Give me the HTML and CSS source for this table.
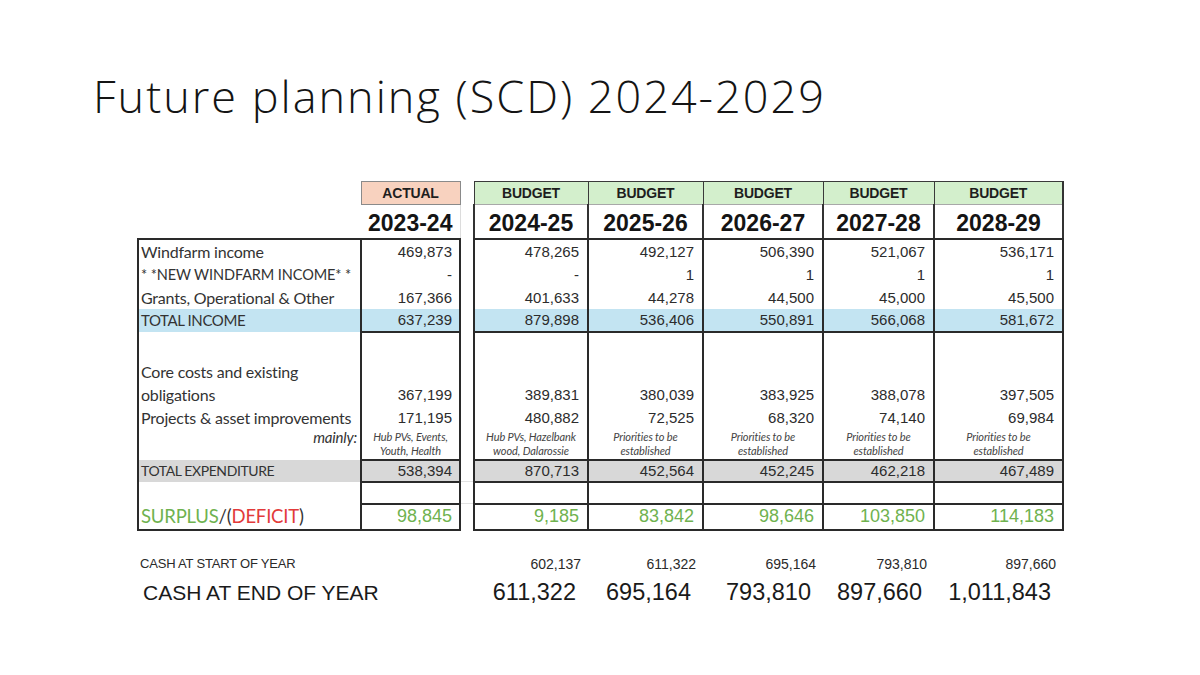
FILE: index.html
```html
<!DOCTYPE html>
<html lang="en">
<head>
<meta charset="utf-8">
<title>Future planning (SCD) 2024-2029</title>
<link rel="stylesheet" href="styles.css">
</head>
<body>
<div class="slide">
  <h1 class="title">Future planning (SCD) 2024-2029</h1>
  <table class="fin">
    <colgroup>
      <col class="c-lbl"><col class="c-act"><col class="c-gap">
      <col class="c-b1"><col class="c-b2"><col class="c-b3"><col class="c-b4"><col class="c-b5">
    </colgroup>
    <tr class="r-head">
      <td class="blank"></td>
      <td class="hdr-act">ACTUAL</td>
      <td class="gap gap-head"></td>
      <td class="hdr-bud">BUDGET</td><td class="hdr-bud">BUDGET</td><td class="hdr-bud">BUDGET</td><td class="hdr-bud">BUDGET</td><td class="hdr-bud hdr-last">BUDGET</td>
    </tr>
    <tr class="r-year">
      <td class="blank"></td>
      <td class="yr yr-act">2023-24</td>
      <td class="gap gap-head"></td>
      <td class="yr bud">2024-25</td><td class="yr bud">2025-26</td><td class="yr bud">2026-27</td><td class="yr bud">2027-28</td><td class="yr bud">2028-29</td>
    </tr>
    <tr class="r-std r-first">
      <td class="lbl">Windfarm income</td>
      <td class="act num">469,873</td>
      <td class="gap"></td>
      <td class="bud num">478,265</td><td class="bud num">492,127</td><td class="bud num">506,390</td><td class="bud num">521,067</td><td class="bud num">536,171</td>
    </tr>
    <tr class="r-std">
      <td class="lbl lbl-spaced">* *NEW WINDFARM INCOME* *</td>
      <td class="act num">-</td>
      <td class="gap"></td>
      <td class="bud num">-</td><td class="bud num">1</td><td class="bud num">1</td><td class="bud num">1</td><td class="bud num">1</td>
    </tr>
    <tr class="r-std">
      <td class="lbl">Grants, Operational &amp; Other</td>
      <td class="act num">167,366</td>
      <td class="gap"></td>
      <td class="bud num">401,633</td><td class="bud num">44,278</td><td class="bud num">44,500</td><td class="bud num">45,000</td><td class="bud num">45,500</td>
    </tr>
    <tr class="r-std r-income">
      <td class="lbl lbl-total">TOTAL INCOME</td>
      <td class="act num">637,239</td>
      <td class="gap"></td>
      <td class="bud num">879,898</td><td class="bud num">536,406</td><td class="bud num">550,891</td><td class="bud num">566,068</td><td class="bud num">581,672</td>
    </tr>
    <tr class="r-blank r-line">
      <td class="lbl"></td>
      <td class="act"></td>
      <td class="gap"></td>
      <td class="bud"></td><td class="bud"></td><td class="bud"></td><td class="bud"></td><td class="bud"></td>
    </tr>
    <tr class="r-core">
      <td class="lbl">Core costs and existing obligations</td>
      <td class="act num">367,199</td>
      <td class="gap"></td>
      <td class="bud num">389,831</td><td class="bud num">380,039</td><td class="bud num">383,925</td><td class="bud num">388,078</td><td class="bud num">397,505</td>
    </tr>
    <tr class="r-std">
      <td class="lbl">Projects &amp; asset improvements</td>
      <td class="act num">171,195</td>
      <td class="gap"></td>
      <td class="bud num">480,882</td><td class="bud num">72,525</td><td class="bud num">68,320</td><td class="bud num">74,140</td><td class="bud num">69,984</td>
    </tr>
    <tr class="r-notes">
      <td class="lbl lbl-mainly">mainly:</td>
      <td class="act note">Hub PVs, Events,<br>Youth, Health</td>
      <td class="gap"></td>
      <td class="bud note">Hub PVs, Hazelbank<br>wood, Dalarossie</td>
      <td class="bud note">Priorities to be<br>established</td>
      <td class="bud note">Priorities to be<br>established</td>
      <td class="bud note">Priorities to be<br>established</td>
      <td class="bud note">Priorities to be<br>established</td>
    </tr>
    <tr class="r-exp r-line">
      <td class="lbl lbl-exp">TOTAL EXPENDITURE</td>
      <td class="act num">538,394</td>
      <td class="gap"></td>
      <td class="bud num">870,713</td><td class="bud num">452,564</td><td class="bud num">452,245</td><td class="bud num">462,218</td><td class="bud num">467,489</td>
    </tr>
    <tr class="r-blank2 r-line">
      <td class="lbl"></td>
      <td class="act"></td>
      <td class="gap gap-faint"></td>
      <td class="bud"></td><td class="bud"></td><td class="bud"></td><td class="bud"></td><td class="bud"></td>
    </tr>
    <tr class="r-surplus r-line r-last">
      <td class="lbl lbl-surplus"><span class="pos">SURPLUS</span>/(<span class="neg">DEFICIT</span>)</td>
      <td class="act num green">98,845</td>
      <td class="gap gap-faint"></td>
      <td class="bud num green">9,185</td><td class="bud num green">83,842</td><td class="bud num green">98,646</td><td class="bud num green">103,850</td><td class="bud num green">114,183</td>
    </tr>
    <tr class="r-spacer"><td colspan="8"></td></tr>
    <tr class="r-cash-start">
      <td class="cash-lbl">CASH AT START OF YEAR</td>
      <td></td><td></td>
      <td class="cash-s">602,137</td><td class="cash-s">611,322</td><td class="cash-s">695,164</td><td class="cash-s">793,810</td><td class="cash-s">897,660</td>
    </tr>
    <tr class="r-cash-end">
      <td class="cash-lbl-big" colspan="2">CASH AT END OF YEAR</td>
      <td></td>
      <td class="cash-e">611,322</td><td class="cash-e">695,164</td><td class="cash-e">793,810</td><td class="cash-e">897,660</td><td class="cash-e">1,011,843</td>
    </tr>
  </table>
</div>
</body>
</html>
```
FILE: styles.css
```css
html, body {
  margin: 0;
  padding: 0;
  background: #ffffff;
}

.slide {
  width: 1200px;
  height: 675px;
  padding-top: 71px;
  box-sizing: border-box;
  overflow: hidden;
}

.title {
  margin: 0 0 0 93px;
  font-family: "Open Sans", "Lato", sans-serif;
  font-weight: 300;
  font-size: 45px;
  line-height: 50px;
  letter-spacing: 2px;
  color: #141414;
  white-space: nowrap;
}

.fin {
  margin: 60px 0 0 137px;
  border-collapse: collapse;
  table-layout: fixed;
  width: 925px;
  font-family: "Liberation Sans", Arial, sans-serif;
  color: #2a2a2a;
}

.c-lbl { width: 223px; }
.c-act { width: 99px; }
.c-gap { width: 14px; }
.c-b1 { width: 114px; }
.c-b2 { width: 115px; }
.c-b3 { width: 120px; }
.c-b4 { width: 111px; }
.c-b5 { width: 129px; }

.fin td {
  padding: 0;
  white-space: nowrap;
  overflow: visible;
}

/* header rows */
.r-head { height: 23px; }
.r-year { height: 34px; }

.hdr-act, .hdr-bud {
  text-align: center;
  font-weight: bold;
  font-size: 14px;
  color: #1e1e1e;
  letter-spacing: -0.2px;
}

.hdr-act {
  background: #f8d2bf;
  border: 1px solid #8a8a8a;
}

.hdr-bud {
  background: #d3efcc;
  border-top: 1px solid #3a3a3a;
  border-left: 1px solid #3a3a3a;
  border-right: 1px solid #3a3a3a;
  border-bottom: 1px solid #a8a8a8;
}

.hdr-last { border-right: 2px solid #333; }

.yr {
  text-align: center;
  font-weight: bold;
  font-size: 23px;
  color: #141414;
  padding-top: 4px !important;
}

.yr.bud {
  border-left: 2px solid #333;
  border-right: 2px solid #333;
}

.gap-head {
  border-left: 1px solid #dcdcdc;
}

/* body rows */
.r-std { height: 23px; }
.r-first { height: 24px; }
.r-blank { height: 27px; }
.r-core { height: 47px; }
.r-notes { height: 31px; }
.r-exp { height: 22px; }
.r-blank2 { height: 22px; }
.r-surplus { height: 26px; }

.lbl {
  border-left: 2px solid #2a2a2a;
  padding-left: 2px !important;
  font-family: "Lato", "Open Sans", sans-serif;
  font-size: 16px;
  color: #333;
  letter-spacing: -0.2px;
}

.lbl-spaced {
  font-size: 14.5px;
  letter-spacing: -0.1px;
}

.lbl-total {
  font-size: 15px;
  letter-spacing: -0.4px;
}

.lbl-exp {
  font-size: 14px;
  letter-spacing: -0.4px;
}

.act, .bud {
  border-left: 2px solid #2a2a2a;
  border-right: 2px solid #2a2a2a;
}

.num {
  text-align: right;
  padding-right: 7px !important;
  font-size: 15px;
  color: #2c2c2c;
}

.bud.num { padding-right: 8px !important; }

.r-first .lbl, .r-first .act, .r-first .bud { border-top: 2px solid #2a2a2a; }
.r-year .bud { border-bottom: 2px solid #2a2a2a; }
.r-line .act, .r-line .bud { border-top: 2px solid #2a2a2a; }
.r-last .lbl, .r-last .act, .r-last .bud { border-bottom: 2px solid #2a2a2a; }

.r-income .lbl, .r-income .act, .r-income .bud { background: #c3e4f2; }
.r-exp .lbl, .r-exp .act, .r-exp .bud { background: #d8d8d8; }

.r-core td {
  vertical-align: bottom;
  line-height: 23px;
}

.r-core .lbl {
  white-space: normal;
  padding-right: 40px !important;
}

.r-notes td { vertical-align: top; }

.lbl-mainly {
  text-align: right;
  font-style: italic;
  font-size: 15px;
  line-height: 16px;
  padding-right: 3px !important;
}

.note {
  text-align: center;
  font-family: "Lato", "Open Sans", sans-serif;
  font-style: italic;
  font-size: 11px;
  line-height: 14px;
  color: #444;
  letter-spacing: -0.1px;
  padding-top: 1px !important;
}

.gap-faint { border-top: 1px solid #e2e2e2; }

.lbl-surplus {
  font-size: 18.5px;
  color: #333;
}

.pos { color: #6fb24f; }
.neg { color: #e23a3a; }

.green {
  color: #6fb24f;
  font-size: 18px;
}

.r-spacer { height: 23px; }
.r-cash-start { height: 22px; }
.r-cash-end { height: 36px; }

.cash-lbl {
  font-size: 13px;
  letter-spacing: -0.2px;
  color: #2a2a2a;
  padding-left: 2px !important;
}

.cash-s {
  text-align: right;
  font-size: 14px;
  padding-right: 7px !important;
  color: #2a2a2a;
}

.cash-lbl-big {
  font-size: 21px;
  color: #1a1a1a;
  padding-left: 5px !important;
}

.cash-e {
  text-align: right;
  font-size: 23.5px;
  padding-right: 12px !important;
  color: #1a1a1a;
}
```
